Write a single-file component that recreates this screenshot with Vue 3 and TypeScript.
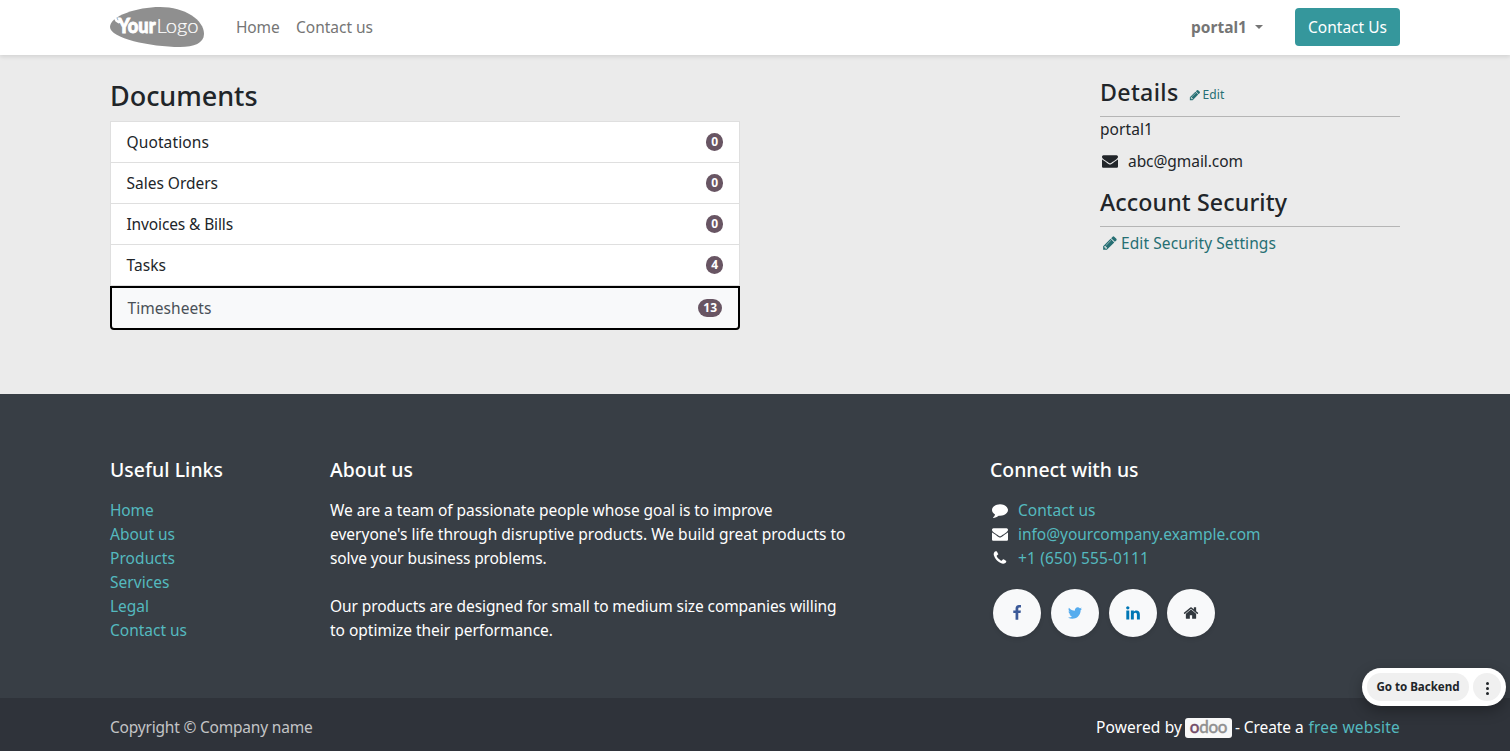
<script setup lang="ts">
import type { Directive } from 'vue'

/* Spreads a line's letters so that its advance equals the given width. */
const vFit: Directive<HTMLElement, number> = {
  mounted(el, { value }) {
    const count = (el.textContent ?? '').trim().length
    const natural = el.getBoundingClientRect().width
    el.style.letterSpacing = `${(value - natural) / count}px`
  },
}

interface Line { text: string; width: number }
interface Doc extends Line { count: number }

const docs: Doc[] = [
  { text: 'Quotations', width: 82.5, count: 0 },
  { text: 'Sales Orders', width: 91.5, count: 0 },
  { text: 'Invoices & Bills', width: 106.5, count: 0 },
  { text: 'Tasks', width: 39.5, count: 4 },
  { text: 'Timesheets', width: 84, count: 13 },
]

const links: Line[] = [
  { text: 'Home', width: 43.5 },
  { text: 'About us', width: 65 },
  { text: 'Products', width: 65 },
  { text: 'Services', width: 59.5 },
  { text: 'Legal', width: 39 },
  { text: 'Contact us', width: 77 },
]

const about: Line[][] = [
  [
    { text: 'We are a team of passionate people whose goal is to improve', width: 442.5 },
    { text: "everyone's life through disruptive products. We build great products to", width: 515.5 },
    { text: 'solve your business problems.', width: 216.5 },
  ],
  [
    { text: 'Our products are designed for small to medium size companies willing', width: 506.5 },
    { text: 'to optimize their performance.', width: 223 },
  ],
]

const icons: Record<string, string> = {
  pencil: 'M491 1536l91-91-235-235-91 91v107h128v128h107zm523-928q0-22-22-22-10 0-17 7l-542 542q-7 7-7 17 0 22 22 22 10 0 17-7l542-542q7-7 7-17zm-54-192l416 416-832 832h-416v-416zm683 96q0 53-37 90l-166 166-416-416 166-165q36-38 90-38 53 0 91 38l235 234q37 39 37 91z',
  envelope: 'M1792 710v794q0 66-47 113t-113 47h-1472q-66 0-113-47t-47-113v-794q44 49 101 87 362 246 497 345 57 42 92.5 65.5t94.5 48 110 24.5h2q51 0 110-24.5t94.5-48 92.5-65.5q170-123 498-345 57-39 100-87zm0-294q0 79-49 151t-122 123q-376 261-468 325-10 7-42.5 31t-54 38.5-52 32.5-57.5 27-50 9h-2q-23 0-50-9t-57.5-27-52-32.5-54-38.5-42.5-31q-91-64-262-182.5t-205-142.5q-62-42-117-115.5t-55-136.5q0-78 41.5-130t118.5-52h1472q65 0 112.5 47t47.5 113z',
  comment: 'M1792 896q0 174-120 321.5t-326 233-450 85.5q-70 0-145-8-198 175-460 242-49 14-114 22-17 2-30.5-9t-17.5-29v-1q-3-4-.5-12t2-10 4.5-9.5l6-9 7-8.5 8-9q7-8 31-34.5t34.5-38 31-39.5 32.5-51 27-59 26-76q-157-89-247.5-220t-90.5-281q0-130 71-248.5t191-204.5 286-136.5 348-50.5q244 0 450 85.5t326 233 120 321.5z',
  phone: 'M1600 1240q0 27-10 70.5t-21 68.5q-21 50-122 106-94 51-186 51-27 0-53-3.5t-57.5-12.5-47-14.5-55.5-20.5-49-18q-98-35-175-83-127-79-264-216t-216-264q-48-77-83-175-3-9-18-49t-20.5-55.5-14.5-47-12.5-57.5-3.5-53q0-92 51-186 56-101 106-122 25-11 68.5-21t70.5-10q14 0 21 3 18 6 53 76 11 19 30 54t35 63.5 31 53.5q3 4 17.5 25t21.5 35.5 7 28.5q0 20-28.5 50t-62 55-62 53-28.5 46q0 9 5 22.5t8.5 20.5 14 24 11.5 19q76 137 174 235t235 174q2 1 19 11.5t24 14 20.5 8.5 22.5 5q18 0 46-28.5t53-62 55-62 50-28.5q14 0 28.5 7t35.5 21.5 25 17.5q25 15 53.5 31t63.5 35 54 30q70 35 76 53 3 7 3 21z',
  facebook: 'M1343 12v264h-157q-86 0-116 36t-30 108v189h293l-39 296h-254v759h-306v-759h-255v-296h255v-218q0-186 104-288.5t277-102.5q147 0 228 12z',
  twitter: 'M1684 408q-67 98-162 167 1 14 1 42 0 130-38 259.5t-115.5 248.5-184.5 210.5-258 146-323 54.5q-271 0-496-145 35 4 78 4 225 0 401-138-105-2-188-64.5t-114-159.5q33 5 61 5 43 0 85-11-112-23-185.5-111.5t-73.5-205.5v-4q68 38 146 41-66-44-105-115t-39-154q0-88 44-163 121 149 294.5 238.5t371.5 99.5q-8-38-8-74 0-134 94.5-228.5t228.5-94.5q140 0 236 102 109-21 205-78-37 115-142 178 93-10 186-50z',
  linkedin: 'M477 625v991h-330v-991h330zm21-306q1 73-50.5 122t-135.5 49h-2q-82 0-132-49t-50-122q0-74 51.5-122.5t134.5-48.5 133 48.5 51 122.5zm1166 729v568h-329v-530q0-105-40.5-164.5t-126.5-59.5q-63 0-105.5 34.5t-63.5 85.5q-11 30-11 81v553h-329q2-399 2-647t-1-296l-1-48h329v144h-2q20-32 41-56t56.5-52 87-43.5 114.5-15.5q171 0 275 113.5t104 332.5z',
  home: 'M1472 992v480q0 26-19 45t-45 19h-384v-384h-256v384h-384q-26 0-45-19t-19-45v-480q0-1 .5-3t.5-3l575-474 575 474q1 2 1 6zm223-69l-62 74q-8 9-21 11h-3q-13 0-21-7l-692-577-692 577q-12 8-24 7-13-2-21-11l-62-74q-8-10-7-23.5t11-21.5l719-599q32-26 76-26t76 26l244 204v-195q0-14 9-23t23-9h192q14 0 23 9t9 23v408l219 182q10 8 11 21.5t-7 23.5z',
}

const contacts = [
  { icon: 'comment', text: 'Contact us', width: 77.5 },
  { icon: 'envelope', text: 'info@yourcompany.example.com', width: 242.5 },
  { icon: 'phone', text: '+1 (650) 555-0111', width: 131 },
]

const socials = ['facebook', 'twitter', 'linkedin', 'home']
</script>

<template>
  <div class="page">
    <header class="header">
      <div class="container bar">
        <svg class="logo" viewBox="0 0 94 40" width="94" height="40">
          <path d="M0 20C0 9 27 0 50 0c25 0 44 13 44 27 0 9-10 13-24 13C40 40 0 31 0 20z" fill="#8f8f8f" />
          <path d="M3.500 10.500l3 .5 1.500 2.500 2.500-2.500 2 4-4 1.500-3-2z" fill="#fff" />
          <text class="logo-bold" x="8" y="26.300" textLength="37.500" lengthAdjust="spacingAndGlyphs">Your</text>
          <text class="logo-light" x="46.500" y="26.300" textLength="42" lengthAdjust="spacingAndGlyphs">Logo</text>
        </svg>
        <nav class="nav">
          <a v-fit="43.5">Home</a>
          <a v-fit="77">Contact us</a>
        </nav>
        <a class="user"><b v-fit="56">portal1</b><i class="caret" /></a>
        <a class="cta"><span v-fit="79">Contact Us</span></a>
      </div>
    </header>

    <main class="container main">
      <section class="documents">
        <h3><span v-fit="147.5">Documents</span></h3>
        <div class="list">
          <a v-for="(d, i) in docs" :key="d.text" class="row" :class="{ focused: i === 4 }">
            <span v-fit="d.width">{{ d.text }}</span>
            <span class="badge">{{ d.count }}</span>
          </a>
        </div>
      </section>
      <aside class="details">
        <h4>
          <span v-fit="78.5">Details</span>
          <a class="edit">
            <svg viewBox="0 0 1792 1792" width="12" height="12"><path :d="icons.pencil" /></svg>
            <span v-fit="22">Edit</span>
          </a>
        </h4>
        <p class="name"><span v-fit="53">portal1</span></p>
        <p class="mail">
          <svg viewBox="0 0 1792 1792" width="16" height="16"><path :d="icons.envelope" /></svg>
          <span v-fit="115">abc@gmail.com</span>
        </p>
        <h4 class="security"><span v-fit="187">Account Security</span></h4>
        <a class="settings">
          <svg viewBox="0 0 1792 1792" width="16" height="16"><path :d="icons.pencil" /></svg>
          <span v-fit="155">Edit Security Settings</span>
        </a>
      </aside>
    </main>

    <footer class="footer">
      <div class="container columns">
        <section class="col-links">
          <h5><span v-fit="113">Useful Links</span></h5>
          <ul>
            <li v-for="l in links" :key="l.text"><a v-fit="l.width">{{ l.text }}</a></li>
          </ul>
        </section>
        <section class="col-about">
          <h5><span v-fit="83">About us</span></h5>
          <p v-for="(p, i) in about" :key="i">
            <template v-for="l in p" :key="l.text"><span v-fit="l.width">{{ l.text }}</span><br></template>
          </p>
        </section>
        <section class="col-connect">
          <h5><span v-fit="148.5">Connect with us</span></h5>
          <ul>
            <li v-for="c in contacts" :key="c.text" class="contact">
              <svg viewBox="0 0 1792 1792" width="16" height="16"><path :d="icons[c.icon]" /></svg>
              <a v-fit="c.width">{{ c.text }}</a>
            </li>
          </ul>
          <div class="socials">
            <a v-for="s in socials" :key="s" :class="s">
              <svg viewBox="0 0 1792 1792" width="16" height="16"><path :d="icons[s]" /></svg>
            </a>
          </div>
        </section>
      </div>
      <div class="copyright">
        <div class="container legal">
          <span v-fit="202.5" class="muted">Copyright © Company name</span>
          <span class="powered">
            <span v-fit="86">Powered by</span>
            <span class="odoo"><span v-fit="37.5"><span class="odoo-first">o</span>doo</span></span>
            <span v-fit="68.5">- Create a</span>
            <a v-fit="91.5" class="free">free website</a>
          </span>
        </div>
      </div>
    </footer>

    <div class="backend">
      <a class="go"><span v-fit="83">Go to Backend</span></a>
      <a class="more"><i /><i /><i /></a>
    </div>
  </div>
</template>

<style>
body { margin: 0; overflow: hidden; }
</style>

<style scoped>
.page {
  height: 751px;
  display: flex;
  flex-direction: column;
  background: #ebebeb;
  color: #212529;
  font: 400 15.5px/24px "Noto Sans", "Open Sans", sans-serif;
  white-space: nowrap;
}
.container { width: 1290px; margin: 0 auto; }
h3, h4, h5, p, ul { margin: 0; padding: 0; font-weight: 550; }
p, ul { font-weight: 400; list-style: none; }
[class] span, [class] a { flex: none; }
svg { fill: currentColor; flex: none; display: block; }

.header { height: 55px; background: #fff; box-shadow: 0 2px 4px rgba(0, 0, 0, .1); flex: none; }
.bar { display: flex; align-items: center; height: 54px; }
.logo-bold { font: 900 20px Lato, sans-serif; fill: #fff; stroke: #fff; stroke-width: .9px; }
.logo-light { font: 300 20.5px Lato, sans-serif; fill: #fff; stroke: #fff; stroke-width: .2px; }
.nav { display: flex; gap: 16.5px; margin-left: 32px; color: #757575; }
.user { display: flex; align-items: center; margin-left: auto; color: #757575; }
.caret { border: 4px solid transparent; border-top-color: currentColor; border-bottom: 0; margin-left: 8px; }
.cta {
  margin-left: 32px;
  width: 105px;
  height: 38px;
  border-radius: 4px;
  background: #35979c;
  color: #fff;
  display: flex;
  align-items: center;
  justify-content: center;
}

.main { height: 339px; display: flex; justify-content: space-between; flex: none; }
.documents { width: 630px; padding-top: 24px; }
h3 { font-size: 27px; line-height: 34px; margin-bottom: 8px; }
.row {
  display: flex;
  justify-content: space-between;
  align-items: center;
  box-sizing: border-box;
  height: 41px;
  padding: 0 16px 0 15.5px;
  border: 1px solid #dfdfdf;
  border-top: 0;
  background: #fff;
}
.row:first-child { height: 42px; border-top: 1px solid #dfdfdf; }
.row.focused {
  height: 44px;
  border: 2px solid #000;
  border-radius: 0 0 4px 4px;
  background: #f8f9fa;
  color: #495057;
}
.badge {
  height: 18px;
  padding: 0 5px;
  border-radius: 9px;
  background: #685563;
  color: #fff;
  font-size: 12px;
  font-weight: 700;
  line-height: 18px;
}

.details { width: 300px; padding-top: 23px; }
h4 {
  display: flex;
  align-items: flex-start;
  height: 38px;
  border-bottom: 1px solid #b5b5b5;
  font-size: 23.2px;
  line-height: 29px;
}
.edit { display: flex; align-items: center; margin: 2px 0 0 10px; gap: 2px; color: #266f73; font-size: 12px; font-weight: 400; }
.name { height: 24px; }
.mail { display: flex; align-items: center; gap: 10px; margin-top: 8px; padding-left: 2px; height: 24px; }
.security { margin-top: 15px; }
.settings { display: flex; align-items: center; gap: 3px; margin-top: 4px; padding-left: 2px; color: #266f73; }

.footer { flex: 1; display: flex; flex-direction: column; background: #383e45; color: #fff; }
.columns { display: flex; height: 240px; padding-top: 64px; }
.footer a { color: #54b9bf; }
h5 { font-size: 19.4px; line-height: 24px; margin-bottom: 16px; }
.col-links { width: 220px; }
.col-about { width: 660px; }
.col-about p + p { margin-top: 24px; }
.contact { display: flex; align-items: center; gap: 10px; padding-left: 2px; }
.socials { display: flex; gap: 10px; margin: 19px 0 0 3px; }
.socials a {
  width: 48px;
  height: 48px;
  display: flex;
  align-items: center;
  justify-content: center;
  border-radius: 50%;
  background: #f8f9fa;
  box-shadow: 0 2px 4px rgba(0, 0, 0, .1);
}
.footer .socials .facebook { color: #3b5998; }
.footer .socials .twitter { color: #55acee; }
.footer .socials .linkedin { color: #0077b5; }
.footer .socials .home { color: #32383e; }
.copyright { height: 53px; background: #2f333a; }
.legal { display: flex; align-items: center; justify-content: space-between; height: 58px; }
.muted { color: #c3c4c6; }
.powered { display: flex; align-items: center; }
.odoo {
  display: flex;
  justify-content: center;
  width: 47px;
  height: 20px;
  margin: 2px 3px 0;
  border-radius: 3px;
  background: #f8f8f8;
  color: #8f8f8f;
  font: 400 17px/18px Lato, sans-serif;
  -webkit-text-stroke: .5px currentColor;
}
.odoo-first { color: #714b67; }
.free { margin-left: 5px; }

.backend {
  position: absolute;
  left: 1362px;
  top: 668px;
  display: flex;
  gap: 4px;
  padding: 5px;
  border-radius: 19px;
  background: #fff;
  box-shadow: 0 5px 14px rgba(0, 0, 0, .3);
}
.go, .more { height: 28px; border-radius: 14px; background: #f0f0f0; }
.go {
  width: 102px;
  display: flex;
  align-items: center;
  justify-content: center;
  font-size: 11.6px;
  font-weight: 700;
}
.more { width: 28px; display: flex; flex-direction: column; align-items: center; justify-content: center; gap: 2px; padding-top: 2px; box-sizing: border-box; }
.more i { width: 3px; height: 3px; border-radius: 50%; background: #212529; }
</style>
